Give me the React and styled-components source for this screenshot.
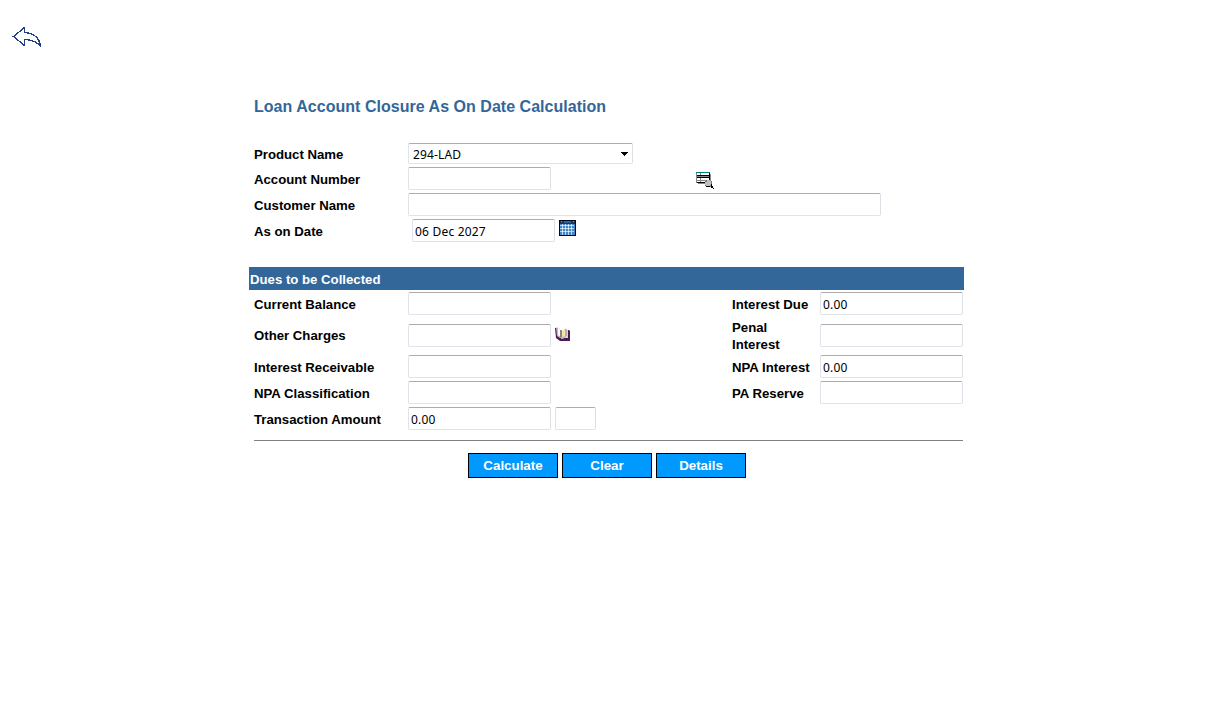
import React from "react";
import styled, { createGlobalStyle } from "styled-components";

const GlobalStyle = createGlobalStyle`
  * { box-sizing: border-box; }
  body { margin: 0; background: #fff; color: #000; font: bold 13.2px/17px "Liberation Sans", Arial, sans-serif; }
`;
const Page = styled.main`
  min-height: 719px;
  padding: 26px 0 0 12px;
`;
const BackIcon = styled.svg`
  display: block;
  width: 30px;
  height: 22px;
`;
const Form = styled.form`
  width: 715px;
  margin: 47px 0 0 237px;
`;
const Title = styled.h1`
  height: 48px;
  margin: 0;
  padding: 2px 0 0 5px;
  color: #336699;
  font-size: 16px;
  line-height: 20px;
  letter-spacing: 0.03px;
`;
const Row = styled.div`
  display: grid;
  grid-template-columns: 154px 324px 88px 143px;
  align-items: start;
  height: ${(p) => p.$height}px;
  padding-left: 5px;
`;
const Label = styled.label`
  padding-top: ${(p) => (p.$top ?? 4)}px;
  width: ${(p) => (p.$narrow ? "60px" : "auto")};
  margin-top: ${(p) => p.$lift || 0}px;
  white-space: ${(p) => (p.$narrow ? "normal" : "nowrap")};
`;
const Controls = styled.div`
  display: flex;
  align-items: flex-start;
  gap: 4px;
  padding-left: ${(p) => p.$indent || 0}px;
`;
const Input = styled.input`
  flex: none;
  width: ${(p) => p.$width || 143}px;
  height: 23px;
  margin: 0;
  padding: 1px 2px 0;
  border: 1px solid #e2e3ea;
  border-top-color: #abadb3;
  border-right-color: #dbdfe6;
  border-radius: 2px;
  outline: 0;
  background: #fff;
  color: #000;
  font: 12px/18px "Noto Sans", "Open Sans", sans-serif;
  letter-spacing: 0.2px;
`;
const Select = styled.div`
  display: flex;
  flex: none;
  align-items: center;
  justify-content: space-between;
  width: 225px;
  height: 21px;
  padding: 2px 4px 0;
  border: 1px solid #e2e3ea;
  border-top-color: #abadb3;
  border-right-color: #dbdfe6;
  border-radius: 2px;
  font: 12px/18px "Noto Sans", "Open Sans", sans-serif;
  letter-spacing: 0.15px;
`;
const Caret = styled.svg`
  width: 7px;
  height: 4px;
  margin-top: -2px;
`;
const Icon = styled.svg`
  flex: none;
  display: block;
  margin-top: ${(p) => p.$top || 0}px;
  margin-left: ${(p) => p.$left || 0}px;
`;
const Banner = styled.h2`
  height: 23px;
  margin: 0 0 2px;
  padding: 4px 1px 0;
  background: #336699;
  color: #fff;
  font-size: 13.2px;
  line-height: 17px;
`;
const Divider = styled.hr`
  height: 1px;
  margin: 0 1px 12px 5px;
  border: 0;
  background: #808080;
`;
const Actions = styled.div`
  display: flex;
  gap: 4px;
  padding-left: 219px;
`;
const Button = styled.button`
  width: 90px;
  height: 25px;
  padding: 0;
  border: 1px solid #000;
  background: #0099ff;
  color: #fff;
  font: bold 13.33px/17px "Liberation Sans", Arial, sans-serif;
`;

const TableSearch = () => (
  <Icon width="18" height="17" viewBox="0 0 18 17" $top={5} $left={141} shapeRendering="crispEdges">
    <path fill="#fff" d="M1 1h12v9H1z" />
    <path fill="#888" d="M0 0h1v11H0zM1 4h12v1H1zM1 8h12v1H1zM4 1h1v9H4zM2 11h8v1H2zM14 2h1v8h-1z" />
    <path fill="#008080" d="M0 0h14v1H0z" />
    <path fill="#000" d="M1 3h13v1H1zM1 5h13v1H1zM1 10h9v1H1zM13 1h1v8h-1z" />
    <path fill="#777" d="M10 8h5v1h1v5h-1v1h-5v-1H9V9h1z" />
    <path fill="#c0c0c0" d="M11 8h3v1h1v4h-1v1h-4v-1H9v-3h2z" />
    <path fill="#000" d="M10 14h4v1h-4zM15 12h1v2h-1zM15 14h2v2h-2zM17 16h1v1h-1z" />
  </Icon>
);
const Calendar = () => (
  <Icon width="17" height="16" viewBox="0 0 17 16" $top={1} shapeRendering="crispEdges">
    <path fill="#050b15" d="M0 0h17v16H0z" />
    <path fill="#24364d" d="M1 1h15v3H1z" />
    <path fill="#2a62a0" d="M5 1h7v2H5z" />
    <path fill="#8b9cad" d="M2 1h1v1H2zM14 1h1v1h-1z" />
    <path fill="#4487c4" d="M1 4h15v11H1z" />
    <path fill="#b5d3eb" d="M3 4h1v11H3zM6 4h1v11H6zM9 4h1v11H9zM12 4h1v11h-1zM1 5h14v1H1zM1 8h14v1H1zM1 11h14v1H1z" />
    <path fill="#f4f9ff" d="M3 5h1v1H3zM6 5h1v1H6zM9 5h1v1H9zM12 5h1v1h-1zM3 8h1v1H3zM6 8h1v1H6zM9 8h1v1H9zM12 8h1v1h-1zM3 11h1v1H3zM6 11h1v1H6zM9 11h1v1H9z" />
  </Icon>
);
const Book = () => (
  <Icon width="15" height="14" viewBox="0 0 15 14" $top={3}>
    <path fill="#4b1b53" d="M0 1h2l1 8 3 2h7V3h1l1 1v10H5L1 11z" />
    <path fill="#c5b3c7" d="M1 0l4 2v9L2 9z" />
    <path fill="#fff" d="M3 1l3 2v7L3 8z" />
    <path fill="#88868a" d="M5 3h2v8L5 10z" />
    <path fill="#f0e99c" d="M7 4l4-3v8l-4 2z" />
    <path fill="#b5b0b8" d="M10 2h2v7l-4 3H6v-1l4-2z" />
    <path fill="#dfcfe0" d="M12 3h1v8H9l3-2z" />
  </Icon>
);

export default function App() {
  return (
    <>
      <GlobalStyle />
      <Page>
        <BackIcon viewBox="0 0 30 22" fill="none" stroke="#213f88" strokeWidth="1.3" shapeRendering="crispEdges">
          <path d="M1.5 10.5L12.5 1.5V6.5Q27 7.5 28.5 20.5Q24 14 12.5 13.5V19.5Z" />
        </BackIcon>
        <Form onSubmit={(e) => e.preventDefault()}>
          <Title>Loan Account Closure As On Date Calculation</Title>
          <Row $height={24}>
            <Label $top={3}>Product Name</Label>
            <Controls><Select><span>294-LAD</span><Caret viewBox="0 0 7 4" shapeRendering="crispEdges"><path d="M0 0h7v1H0zM1 1h5v1H1zM2 2h3v1H2zM3 3h1v1H3z" /></Caret></Select></Controls>
          </Row>
          <Row $height={26}>
            <Label>Account Number</Label>
            <Controls><Input /><TableSearch /></Controls>
          </Row>
          <Row $height={26}>
            <Label>Customer Name</Label>
            <Controls><Input $width={473} /></Controls>
          </Row>
          <Row $height={48}>
            <Label>As on Date</Label>
            <Controls $indent={4}><Input defaultValue="06 Dec 2027" /><Calendar /></Controls>
          </Row>
          <Banner>Dues to be Collected</Banner>
          <Row $height={32}>
            <Label>Current Balance</Label>
            <Controls><Input /></Controls>
            <Label>Interest Due</Label>
            <Input defaultValue="0.00" />
          </Row>
          <Row $height={31}>
            <Label $top={3}>Other Charges</Label>
            <Controls><Input /><Book /></Controls>
            <Label $narrow $top={0} $lift={-5}>Penal Interest</Label>
            <Input />
          </Row>
          <Row $height={26}>
            <Label>Interest Receivable</Label>
            <Controls><Input /></Controls>
            <Label>NPA Interest</Label>
            <Input defaultValue="0.00" />
          </Row>
          <Row $height={26}>
            <Label>NPA Classification</Label>
            <Controls><Input /></Controls>
            <Label>PA Reserve</Label>
            <Input />
          </Row>
          <Row $height={33}>
            <Label>Transaction Amount</Label>
            <Controls><Input defaultValue="0.00" /><Input $width={41} /></Controls>
          </Row>
          <Divider />
          <Actions>
            <Button>Calculate</Button>
            <Button>Clear</Button>
            <Button>Details</Button>
          </Actions>
        </Form>
      </Page>
    </>
  );
}
